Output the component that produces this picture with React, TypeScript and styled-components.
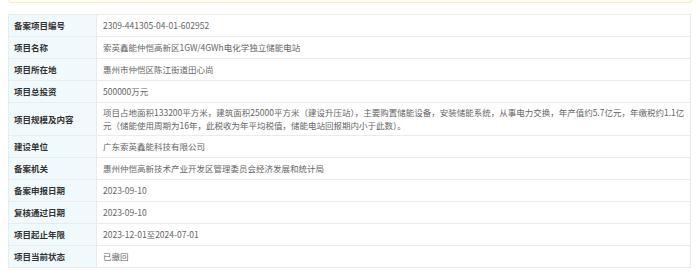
import React from "react";
import styled, { createGlobalStyle } from "styled-components";

const GlobalStyle = createGlobalStyle`
  body {
    margin: 0;
    padding: 0 8px;
    background: #ffffff;
    font-family: "Microsoft YaHei", "Noto Sans CJK SC", "Noto Sans", sans-serif;
  }
`;

interface RowI {
  label: string;
  value: string;
}

const rows: RowI[] = [
  { label: "备案项目编号", value: "2309-441305-04-01-602952" },
  { label: "项目名称", value: "索英鑫能仲恺高新区1GW/4GWh电化学独立储能电站" },
  { label: "项目所在地", value: "惠州市仲恺区陈江街道田心尚" },
  { label: "项目总投资", value: "500000万元" },
  {
    label: "项目规模及内容",
    value:
      "项目占地面积133200平方米，建筑面积25000平方米（建设升压站），主要购置储能设备，安装储能系统，从事电力交换，年产值约5.7亿元，年缴税约1.1亿元（储能使用周期为16年，此税收为年平均税值，储能电站回报期内小于此数）。",
  },
  { label: "建设单位", value: "广东索英鑫能科技有限公司" },
  { label: "备案机关", value: "惠州仲恺高新技术产业开发区管理委员会经济发展和统计局" },
  { label: "备案申报日期", value: "2023-09-10" },
  { label: "复核通过日期", value: "2023-09-10" },
  { label: "项目起止年限", value: "2023-12-01至2024-07-01" },
  { label: "项目当前状态", value: "已撤回" },
];

const App: React.FC = () => (
  <>
    <GlobalStyle />
    <Notice />
    <InfoTable>
      <colgroup>
        <col style={{ width: 88 }} />
        <col />
      </colgroup>
      <tbody>
        {rows.map((row) => (
          <Row key={row.label}>
            <LabelCell>{row.label}</LabelCell>
            <ValueCell>{row.value}</ValueCell>
          </Row>
        ))}
      </tbody>
    </InfoTable>
  </>
);

export default App;

const Notice = styled.div`
  box-sizing: border-box;
  width: 684px;
  height: 3px;
  margin-bottom: 11px;
  background: #fffdf3;
  border: 1px solid #fcedc2;
  border-top: none;
  border-radius: 0 0 4px 4px;
`;

const InfoTable = styled.table`
  width: 683px;
  border-collapse: collapse;
  table-layout: fixed;
  font-size: 8.5px;
  line-height: 13px;
  td {
    border: 1px solid #ebebeb;
    vertical-align: middle;
  }
`;

const Row = styled.tr`
  height: 22px;
`;

const LabelCell = styled.td`
  padding: 3px 4px 3px 5px;
  background: #f0f9fc;
  color: #333333;
  font-weight: bold;
  white-space: nowrap;
`;

const ValueCell = styled.td`
  padding: 3px 1px 3px 6px;
  color: #666666;
  background: #ffffff;
`;
